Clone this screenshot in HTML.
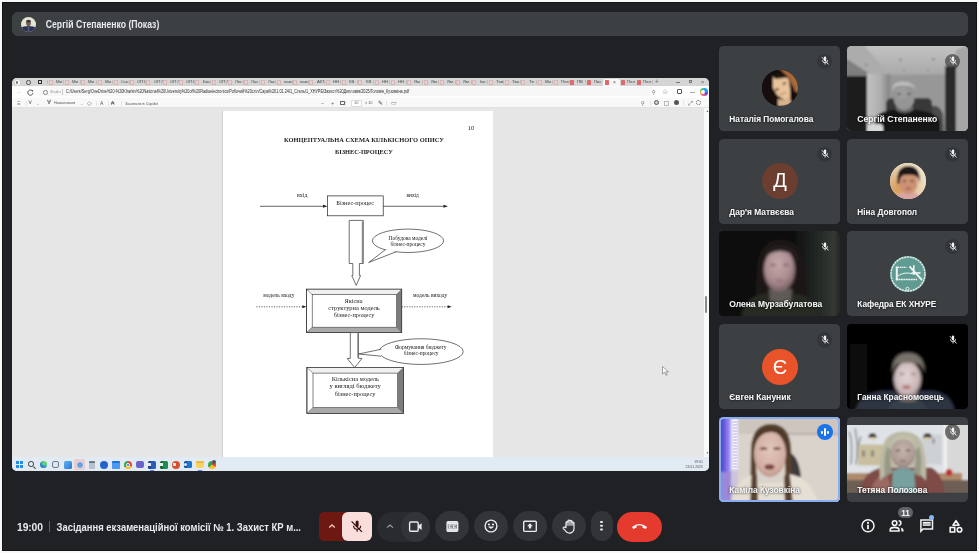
<!DOCTYPE html>
<html><head><meta charset="utf-8">
<style>
*{margin:0;padding:0;box-sizing:border-box}
html,body{width:979px;height:553px;overflow:hidden;background:#f8f8f8;font-family:"Liberation Sans",sans-serif}
.a{position:absolute}
.tile{position:absolute;width:121px;height:85.3px;border-radius:4.5px;background:#3c4043;overflow:hidden}
.nm{position:absolute;left:10px;top:67.4px;color:#f1f3f4;font-weight:bold;font-size:9px;line-height:11px;white-space:nowrap;text-shadow:0 0 2px rgba(0,0,0,.35)}
.mute{position:absolute;left:99px;top:8px;width:15px;height:15px;border-radius:50%;background:rgba(32,33,36,.45)}
.av{position:absolute;width:36px;height:36px;border-radius:50%;left:42px;top:24px;overflow:hidden}
.btn{position:absolute;top:511px;height:30px;width:34px;border-radius:15px;background:#333438}
.bl{position:absolute;filter:blur(1px)}
.tb{position:absolute;top:0;height:8px}
svg{will-change:transform}
#share div{will-change:transform}
</style></head><body>
<div class="a" style="left:2px;top:2px;width:975px;height:549px;background:#202124;box-shadow:inset 0 0 0 1px #141416"></div>
<svg width="0" height="0" style="position:absolute"><defs><filter id="ts" x="-10%" y="-30%" width="120%" height="160%"><feDropShadow dx="0" dy="0.3" stdDeviation="0.9" flood-color="#000" flood-opacity="0.55"/></filter></defs></svg>
<div class="a" style="left:12px;top:12px;width:956px;height:24px;border-radius:6px;background:#3c4043"></div>
<svg class="a" style="left:21px;top:16.5px" width="15" height="15" viewBox="0 0 15 15"><defs><clipPath id="ca"><circle cx="7.5" cy="7.5" r="7.5"/></clipPath></defs><g clip-path="url(#ca)"><rect x="-2" y="-2" width="19" height="19" fill="#e4e4d4"/><path d="M-1 16 V12 Q1 9 7.5 9 Q14 9 16 12 V16 Z" fill="#2a3158"/><rect x="6.7" y="9.5" width="1.6" height="7" fill="#5e5868"/><ellipse cx="7.5" cy="6.3" rx="2.3" ry="3" fill="#6e5e58"/><path d="M5 5.2 Q5 2.8 7.5 2.8 Q10 2.8 10 5.2 Z" fill="#3e3434"/></g></svg>
<svg class="a" style="left:45px;top:16px" width="120" height="16"><text x="0.8" y="12.1" font-family="Liberation Sans" font-weight="bold" font-size="10" fill="#e8eaed" textLength="113.5" lengthAdjust="spacingAndGlyphs">Сергій Степаненко (Показ)</text></svg>
<div class="a" id="share" style="left:12px;top:78px;width:697px;height:393px;border-radius:5px 5px 5px 5px;overflow:hidden;background:#e6e6e6">
<div class="a" style="left:0;top:0;width:697px;height:8px;background:#d5d5d5"></div>
<div class="a" style="left:2.5px;top:1.5px;width:5px;height:5px;border-radius:50%;background:#fafafa"></div>
<div class="a" style="left:4.2px;top:2.6px;width:1.6px;height:2.8px;border-radius:1px;background:#777"></div>
<div class="a" style="left:14px;top:1.8px;width:4.5px;height:4.5px;border-radius:50%;border:1px solid #555"></div>
<div class="a" style="left:25.5px;top:2px;width:4px;height:4px;border:1px solid #333;border-top-width:1.6px"></div>
<div class="a" style="left:36.6px;top:1.6px;width:4.2px;height:5px;border:0.6px solid #dcb4b4;background:#e6d4d4;border-radius:.5px"></div><div class="a" style="left:43.8px;top:1.3px;font-size:4.3px;line-height:5px;color:#4a4a4a;white-space:nowrap">Ми</div><div class="a" style="left:35.0px;top:2px;width:0.6px;height:4px;background:#bdbdbd"></div><div class="a" style="left:52.9px;top:1.6px;width:4.2px;height:5px;border:0.6px solid #dcb4b4;background:#e6d4d4;border-radius:.5px"></div><div class="a" style="left:60.1px;top:1.3px;font-size:4.3px;line-height:5px;color:#4a4a4a;white-space:nowrap">Ми</div><div class="a" style="left:51.3px;top:2px;width:0.6px;height:4px;background:#bdbdbd"></div><div class="a" style="left:69.2px;top:1.6px;width:4.2px;height:5px;border:0.6px solid #dcb4b4;background:#e6d4d4;border-radius:.5px"></div><div class="a" style="left:76.4px;top:1.3px;font-size:4.3px;line-height:5px;color:#4a4a4a;white-space:nowrap">Ми</div><div class="a" style="left:67.6px;top:2px;width:0.6px;height:4px;background:#bdbdbd"></div><div class="a" style="left:85.5px;top:1.6px;width:4.2px;height:5px;border:0.6px solid #dcb4b4;background:#e6d4d4;border-radius:.5px"></div><div class="a" style="left:92.7px;top:1.3px;font-size:4.3px;line-height:5px;color:#4a4a4a;white-space:nowrap">Ми</div><div class="a" style="left:83.9px;top:2px;width:0.6px;height:4px;background:#bdbdbd"></div><div class="a" style="left:101.8px;top:1.6px;width:4.2px;height:5px;border:0.6px solid #dcb4b4;background:#e6d4d4;border-radius:.5px"></div><div class="a" style="left:109.0px;top:1.3px;font-size:4.3px;line-height:5px;color:#4a4a4a;white-space:nowrap">Сас</div><div class="a" style="left:100.2px;top:2px;width:0.6px;height:4px;background:#bdbdbd"></div><div class="a" style="left:118.1px;top:1.6px;width:4.2px;height:5px;border:0.6px solid #dcb4b4;background:#e6d4d4;border-radius:.5px"></div><div class="a" style="left:125.3px;top:1.3px;font-size:4.3px;line-height:5px;color:#4a4a4a;white-space:nowrap">ОПУ</div><div class="a" style="left:116.5px;top:2px;width:0.6px;height:4px;background:#bdbdbd"></div><div class="a" style="left:134.4px;top:1.6px;width:4.2px;height:5px;border:0.6px solid #dcb4b4;background:#e6d4d4;border-radius:.5px"></div><div class="a" style="left:141.6px;top:1.3px;font-size:4.3px;line-height:5px;color:#4a4a4a;white-space:nowrap">ОПУ</div><div class="a" style="left:132.8px;top:2px;width:0.6px;height:4px;background:#bdbdbd"></div><div class="a" style="left:150.7px;top:1.6px;width:4.2px;height:5px;border:0.6px solid #dcb4b4;background:#e6d4d4;border-radius:.5px"></div><div class="a" style="left:157.9px;top:1.3px;font-size:4.3px;line-height:5px;color:#4a4a4a;white-space:nowrap">ОПУ</div><div class="a" style="left:149.1px;top:2px;width:0.6px;height:4px;background:#bdbdbd"></div><div class="a" style="left:167.0px;top:1.6px;width:4.2px;height:5px;border:0.6px solid #dcb4b4;background:#e6d4d4;border-radius:.5px"></div><div class="a" style="left:174.2px;top:1.3px;font-size:4.3px;line-height:5px;color:#4a4a4a;white-space:nowrap">ОПУ</div><div class="a" style="left:165.4px;top:2px;width:0.6px;height:4px;background:#bdbdbd"></div><div class="a" style="left:183.3px;top:1.6px;width:4.2px;height:5px;border:0.6px solid #dcb4b4;background:#e6d4d4;border-radius:.5px"></div><div class="a" style="left:190.5px;top:1.3px;font-size:4.3px;line-height:5px;color:#4a4a4a;white-space:nowrap">Бос</div><div class="a" style="left:181.7px;top:2px;width:0.6px;height:4px;background:#bdbdbd"></div><div class="a" style="left:199.6px;top:1.6px;width:4.2px;height:5px;border:0.6px solid #dcb4b4;background:#e6d4d4;border-radius:.5px"></div><div class="a" style="left:206.8px;top:1.3px;font-size:4.3px;line-height:5px;color:#4a4a4a;white-space:nowrap">ОПУ</div><div class="a" style="left:198.0px;top:2px;width:0.6px;height:4px;background:#bdbdbd"></div><div class="a" style="left:215.9px;top:1.6px;width:4.2px;height:5px;border:0.6px solid #dcb4b4;background:#e6d4d4;border-radius:.5px"></div><div class="a" style="left:223.1px;top:1.3px;font-size:4.3px;line-height:5px;color:#4a4a4a;white-space:nowrap">Лес</div><div class="a" style="left:214.3px;top:2px;width:0.6px;height:4px;background:#bdbdbd"></div><div class="a" style="left:232.2px;top:1.6px;width:4.2px;height:5px;border:0.6px solid #dcb4b4;background:#e6d4d4;border-radius:.5px"></div><div class="a" style="left:239.4px;top:1.3px;font-size:4.3px;line-height:5px;color:#4a4a4a;white-space:nowrap">Лас</div><div class="a" style="left:230.6px;top:2px;width:0.6px;height:4px;background:#bdbdbd"></div><div class="a" style="left:248.5px;top:1.6px;width:4.2px;height:5px;border:0.6px solid #dcb4b4;background:#e6d4d4;border-radius:.5px"></div><div class="a" style="left:255.7px;top:1.3px;font-size:4.3px;line-height:5px;color:#4a4a4a;white-space:nowrap">Лас</div><div class="a" style="left:246.9px;top:2px;width:0.6px;height:4px;background:#bdbdbd"></div><div class="a" style="left:264.8px;top:1.6px;width:4.2px;height:5px;border:0.6px solid #dcb4b4;background:#e6d4d4;border-radius:.5px"></div><div class="a" style="left:272.0px;top:1.3px;font-size:4.3px;line-height:5px;color:#4a4a4a;white-space:nowrap">пам</div><div class="a" style="left:263.2px;top:2px;width:0.6px;height:4px;background:#bdbdbd"></div><div class="a" style="left:281.1px;top:1.6px;width:4.2px;height:5px;border:0.6px solid #dcb4b4;background:#e6d4d4;border-radius:.5px"></div><div class="a" style="left:288.3px;top:1.3px;font-size:4.3px;line-height:5px;color:#4a4a4a;white-space:nowrap">пам</div><div class="a" style="left:279.5px;top:2px;width:0.6px;height:4px;background:#bdbdbd"></div><div class="a" style="left:297.4px;top:1.6px;width:4.2px;height:5px;border:0.6px solid #dcb4b4;background:#e6d4d4;border-radius:.5px"></div><div class="a" style="left:304.6px;top:1.3px;font-size:4.3px;line-height:5px;color:#4a4a4a;white-space:nowrap">АКТ</div><div class="a" style="left:295.8px;top:2px;width:0.6px;height:4px;background:#bdbdbd"></div><div class="a" style="left:313.7px;top:1.6px;width:4.2px;height:5px;border:0.6px solid #dcb4b4;background:#e6d4d4;border-radius:.5px"></div><div class="a" style="left:320.9px;top:1.3px;font-size:4.3px;line-height:5px;color:#4a4a4a;white-space:nowrap">НН</div><div class="a" style="left:312.1px;top:2px;width:0.6px;height:4px;background:#bdbdbd"></div><div class="a" style="left:330.0px;top:1.6px;width:4.2px;height:5px;border:0.6px solid #dcb4b4;background:#e6d4d4;border-radius:.5px"></div><div class="a" style="left:337.2px;top:1.3px;font-size:4.3px;line-height:5px;color:#4a4a4a;white-space:nowrap">КВ</div><div class="a" style="left:328.4px;top:2px;width:0.6px;height:4px;background:#bdbdbd"></div><div class="a" style="left:346.3px;top:1.6px;width:4.2px;height:5px;border:0.6px solid #dcb4b4;background:#e6d4d4;border-radius:.5px"></div><div class="a" style="left:353.5px;top:1.3px;font-size:4.3px;line-height:5px;color:#4a4a4a;white-space:nowrap">КВ</div><div class="a" style="left:344.7px;top:2px;width:0.6px;height:4px;background:#bdbdbd"></div><div class="a" style="left:362.6px;top:1.6px;width:4.2px;height:5px;border:0.6px solid #dcb4b4;background:#e6d4d4;border-radius:.5px"></div><div class="a" style="left:369.8px;top:1.3px;font-size:4.3px;line-height:5px;color:#4a4a4a;white-space:nowrap">НН</div><div class="a" style="left:361.0px;top:2px;width:0.6px;height:4px;background:#bdbdbd"></div><div class="a" style="left:378.9px;top:1.6px;width:4.2px;height:5px;border:0.6px solid #dcb4b4;background:#e6d4d4;border-radius:.5px"></div><div class="a" style="left:386.1px;top:1.3px;font-size:4.3px;line-height:5px;color:#4a4a4a;white-space:nowrap">НН</div><div class="a" style="left:377.3px;top:2px;width:0.6px;height:4px;background:#bdbdbd"></div><div class="a" style="left:395.2px;top:1.6px;width:4.2px;height:5px;border:0.6px solid #dcb4b4;background:#e6d4d4;border-radius:.5px"></div><div class="a" style="left:402.4px;top:1.3px;font-size:4.3px;line-height:5px;color:#4a4a4a;white-space:nowrap">Ям</div><div class="a" style="left:393.6px;top:2px;width:0.6px;height:4px;background:#bdbdbd"></div><div class="a" style="left:411.5px;top:1.6px;width:4.2px;height:5px;border:0.6px solid #dcb4b4;background:#e6d4d4;border-radius:.5px"></div><div class="a" style="left:418.7px;top:1.3px;font-size:4.3px;line-height:5px;color:#4a4a4a;white-space:nowrap">Ям</div><div class="a" style="left:409.9px;top:2px;width:0.6px;height:4px;background:#bdbdbd"></div><div class="a" style="left:427.8px;top:1.6px;width:4.2px;height:5px;border:0.6px solid #dcb4b4;background:#e6d4d4;border-radius:.5px"></div><div class="a" style="left:435.0px;top:1.3px;font-size:4.3px;line-height:5px;color:#4a4a4a;white-space:nowrap">Ям</div><div class="a" style="left:426.2px;top:2px;width:0.6px;height:4px;background:#bdbdbd"></div><div class="a" style="left:444.1px;top:1.6px;width:4.2px;height:5px;border:0.6px solid #dcb4b4;background:#e6d4d4;border-radius:.5px"></div><div class="a" style="left:451.3px;top:1.3px;font-size:4.3px;line-height:5px;color:#4a4a4a;white-space:nowrap">Ям</div><div class="a" style="left:442.5px;top:2px;width:0.6px;height:4px;background:#bdbdbd"></div><div class="a" style="left:460.4px;top:1.6px;width:4.2px;height:5px;border:0.6px solid #dcb4b4;background:#e6d4d4;border-radius:.5px"></div><div class="a" style="left:467.6px;top:1.3px;font-size:4.3px;line-height:5px;color:#4a4a4a;white-space:nowrap">Іко</div><div class="a" style="left:458.8px;top:2px;width:0.6px;height:4px;background:#bdbdbd"></div><div class="a" style="left:476.7px;top:1.6px;width:4.2px;height:5px;border:0.6px solid #dcb4b4;background:#e6d4d4;border-radius:.5px"></div><div class="a" style="left:483.9px;top:1.3px;font-size:4.3px;line-height:5px;color:#4a4a4a;white-space:nowrap">Тев</div><div class="a" style="left:475.1px;top:2px;width:0.6px;height:4px;background:#bdbdbd"></div><div class="a" style="left:493.0px;top:1.6px;width:4.2px;height:5px;border:0.6px solid #dcb4b4;background:#e6d4d4;border-radius:.5px"></div><div class="a" style="left:500.2px;top:1.3px;font-size:4.3px;line-height:5px;color:#4a4a4a;white-space:nowrap">Тва</div><div class="a" style="left:491.4px;top:2px;width:0.6px;height:4px;background:#bdbdbd"></div><div class="a" style="left:509.3px;top:1.6px;width:4.2px;height:5px;border:0.6px solid #dcb4b4;background:#e6d4d4;border-radius:.5px"></div><div class="a" style="left:516.5px;top:1.3px;font-size:4.3px;line-height:5px;color:#4a4a4a;white-space:nowrap">Тв</div><div class="a" style="left:507.7px;top:2px;width:0.6px;height:4px;background:#bdbdbd"></div><div class="a" style="left:525.6px;top:1.6px;width:4.2px;height:5px;border:0.6px solid #dcb4b4;background:#e6d4d4;border-radius:.5px"></div><div class="a" style="left:532.8px;top:1.3px;font-size:4.3px;line-height:5px;color:#4a4a4a;white-space:nowrap">Ми</div><div class="a" style="left:524.0px;top:2px;width:0.6px;height:4px;background:#bdbdbd"></div><div class="a" style="left:541.9px;top:1.6px;width:4.2px;height:5px;border:0.6px solid #dcb4b4;background:#e6d4d4;border-radius:.5px"></div><div class="a" style="left:549.1px;top:1.3px;font-size:4.3px;line-height:5px;color:#4a4a4a;white-space:nowrap">Пле</div><div class="a" style="left:540.3px;top:2px;width:0.6px;height:4px;background:#bdbdbd"></div><div class="a" style="left:558.2px;top:1.6px;width:4.2px;height:5px;background:#e06a6a;border-radius:.6px"></div><div class="a" style="left:565.4px;top:1.3px;font-size:4.3px;line-height:5px;color:#4a4a4a;white-space:nowrap">ПВ</div><div class="a" style="left:556.6px;top:2px;width:0.6px;height:4px;background:#bdbdbd"></div><div class="a" style="left:574.5px;top:1.6px;width:4.2px;height:5px;background:#e06a6a;border-radius:.6px"></div><div class="a" style="left:581.7px;top:1.3px;font-size:4.3px;line-height:5px;color:#4a4a4a;white-space:nowrap">Пис</div><div class="a" style="left:572.9px;top:2px;width:0.6px;height:4px;background:#bdbdbd"></div>
<div class="a" style="left:590.5px;top:0.5px;width:16.5px;height:7.5px;background:#f7f7f7;border-radius:2px 2px 0 0"></div>
<div class="a" style="left:593px;top:1.8px;width:3.8px;height:4.8px;background:#e06a6a;border-radius:.6px"></div>
<div class="a" style="left:600.6px;top:0.9px;font-size:5px;line-height:6px;color:#555">×</div>
<div class="a" style="left:608.5px;top:1.8px;width:3.8px;height:4.8px;background:#e06a6a;border-radius:.6px"></div>
<div class="a" style="left:615.0px;top:1.3px;font-size:4.3px;line-height:5px;color:#4a4a4a">Пол</div>
<div class="a" style="left:624.5px;top:1.8px;width:3.8px;height:4.8px;background:#e06a6a;border-radius:.6px"></div>
<div class="a" style="left:631.0px;top:1.3px;font-size:4.3px;line-height:5px;color:#4a4a4a">Пол</div>
<div class="a" style="left:640.3px;top:2px;width:0.6px;height:4px;background:#bdbdbd"></div>
<div class="a" style="left:642.6px;top:0px;font-size:6.5px;line-height:8px;color:#666">+</div>
<div class="a" style="left:664px;top:4px;width:4px;height:0.6px;background:#777"></div>
<div class="a" style="left:676.6px;top:2.4px;width:3.4px;height:3.4px;border:0.6px solid #777"></div>
<div class="a" style="left:688.6px;top:0.6px;font-size:5.5px;line-height:7px;color:#666">×</div>
<div class="a" style="left:0;top:8px;width:697px;height:12px;background:#fdfdfd"></div>
<div class="a" style="left:3.5px;top:10.5px;font-size:6px;line-height:7px;color:#c8c8c8">←</div>
<svg class="a" style="left:14.5px;top:10.5px" width="7" height="7" viewBox="0 0 7 7"><path d="M5.6 2.2 A2.6 2.6 0 1 0 6 4" fill="none" stroke="#444" stroke-width="0.9"/><path d="M4.3 0.9 L6.2 1.2 L5.9 3.1 Z" fill="#444"/></svg>
<div class="a" style="left:27px;top:9.3px;width:615px;height:9.4px;border-radius:5px;background:#f7f7f7"></div>
<div class="a" style="left:30.5px;top:11.6px;width:4.6px;height:4.6px;border-radius:50%;border:0.7px solid #888"></div>
<div class="a" style="left:38px;top:11.3px;font-size:4.4px;line-height:5px;color:#9a9a9a">Файл</div>
<div class="a" style="left:49.5px;top:11px;width:0.6px;height:5.5px;background:#ccc"></div>
<svg class="a" style="left:53px;top:9px" width="350" height="10"><text x="1" y="6.4" font-family="Liberation Sans" font-size="4.6" fill="#2e2e2e" textLength="343" lengthAdjust="spacingAndGlyphs">C:/Users/Serg/OneDrive%20-%20Kharkiv%20National%20University%20of%20Radioelectronics/Робочий%20стіл/Сара%201.01.24/1_Сталь/1_ХНУРЕ/Захист%20Дипломів/2025/Головін_Кузовкіна.pdf</text></svg>
<div class="a" style="left:640px;top:11px;font-size:5px;line-height:6px;color:#555">&#9906;</div>
<div class="a" style="left:650px;top:10.2px;font-size:6.5px;line-height:7px;color:#555">☆</div>
<div class="a" style="left:665px;top:11.2px;width:4.6px;height:4.6px;border-radius:1px;border:0.8px solid #555"></div>
<div class="a" style="left:677.5px;top:13.5px;width:4.5px;height:0.7px;background:#aaa"></div>
<div class="a" style="left:687.5px;top:10.3px;width:7.5px;height:7.5px;border-radius:50%;background:conic-gradient(#1fa2f2 0 25%,#6b4ee8 25% 45%,#f25f8c 45% 65%,#f8a33c 65% 80%,#3ac47d 80% 100%)"></div>
<div class="a" style="left:689.3px;top:12.1px;width:3.9px;height:3.9px;border-radius:50%;background:#fdfdfd"></div>
<div class="a" style="left:0;top:20px;width:697px;height:10.4px;background:#f8f8f8;border-bottom:0.6px solid #e2e2e2"></div>
<div class="a" style="left:4.5px;top:21.9px;font-size:4.0px;line-height:7px;color:#777;white-space:nowrap">☰</div>
<div class="a" style="left:13.5px;top:21.7px;font-size:5.0px;line-height:7px;color:#ccc;white-space:nowrap">|</div>
<div class="a" style="left:15.6px;top:21.4px;font-size:6.0px;line-height:7px;color:#555;white-space:nowrap">⋎</div>
<div class="a" style="left:24.3px;top:21.9px;font-size:4.0px;line-height:7px;color:#999;white-space:nowrap">⌄</div>
<div class="a" style="left:35.3px;top:21.4px;font-size:6.0px;line-height:7px;color:#444;white-space:nowrap">∀</div>
<div class="a" style="left:42.0px;top:22.1px;font-size:3.6px;line-height:7px;color:#555;white-space:nowrap">Намалювати</div>
<div class="a" style="left:68.0px;top:21.9px;font-size:4.0px;line-height:7px;color:#999;white-space:nowrap">⌄</div>
<div class="a" style="left:74.5px;top:21.5px;font-size:5.5px;line-height:7px;color:#555;white-space:nowrap">◇</div>
<div class="a" style="left:83.6px;top:21.7px;font-size:5.0px;line-height:7px;color:#ccc;white-space:nowrap">|</div>
<div class="a" style="left:87.6px;top:21.7px;font-size:5.0px;line-height:7px;color:#555;white-space:nowrap">A</div>
<div class="a" style="left:95.8px;top:21.7px;font-size:5.0px;line-height:7px;color:#ccc;white-space:nowrap">|</div>
<div class="a" style="left:99.0px;top:21.7px;font-size:5.0px;line-height:7px;color:#444;white-space:nowrap">₳</div>
<div class="a" style="left:108.8px;top:21.7px;font-size:5.0px;line-height:7px;color:#ccc;white-space:nowrap">|</div>
<div class="a" style="left:113.0px;top:22.0px;font-size:3.9px;line-height:7px;color:#555;white-space:nowrap">Зачитати в Copilot</div>
<div class="a" style="left:308.5px;top:21.5px;font-size:5.5px;line-height:7px;color:#666;white-space:nowrap">−</div>
<div class="a" style="left:318.5px;top:21.5px;font-size:5.5px;line-height:7px;color:#666;white-space:nowrap">+</div>
<div class="a" style="left:333.0px;top:21.7px;font-size:5.0px;line-height:7px;color:#ccc;white-space:nowrap">|</div>
<div class="a" style="left:374.0px;top:21.7px;font-size:5.0px;line-height:7px;color:#ccc;white-space:nowrap">|</div>
<div class="a" style="left:378.5px;top:21.5px;font-size:5.5px;line-height:7px;color:#777;white-space:nowrap">▭</div>
<div class="a" style="left:328px;top:22.8px;width:4.6px;height:4.2px;border:0.7px solid #666;border-radius:.7px"></div>
<div class="a" style="left:338.5px;top:21.7px;width:11px;height:7px;background:#fff;border:0.5px solid #ddd;border-radius:1px"></div>
<div class="a" style="left:342px;top:22.2px;font-size:4px;line-height:6px;color:#666">10</div>
<div class="a" style="left:352.5px;top:22.2px;font-size:4px;line-height:6px;color:#666">з 10</div>
<div class="a" style="left:366px;top:22px;font-size:5.5px;line-height:6px;color:#555">&#9998;</div>
<div class="a" style="left:629.0px;top:21.6px;font-size:5.0px;line-height:7px;color:#555">&#9906;</div>
<div class="a" style="left:637.6px;top:21.6px;font-size:5.0px;line-height:7px;color:#ccc">|</div>
<div class="a" style="left:676.0px;top:21.6px;font-size:6.0px;line-height:7px;color:#444">⤢</div>
<div class="a" style="left:670.5px;top:21.6px;font-size:5.0px;line-height:7px;color:#ccc">|</div>
<div class="a" style="left:642px;top:22.4px;width:5px;height:5px;border-radius:50%;border:0.9px solid #555;background:#cfcfcf"></div>
<div class="a" style="left:652px;top:22.6px;width:4.5px;height:4.5px;border:0.7px solid #bbb"></div>
<div class="a" style="left:661.5px;top:22.4px;width:5px;height:5px;border-radius:50%;background:#555"></div>
<div class="a" style="left:684px;top:22.4px;width:5px;height:5px;border-radius:50%;border:1px dotted #666"></div>
<div class="a" style="left:211px;top:33px;width:270px;height:347px;background:#ffffff;box-shadow:-0.6px 0 0.8px rgba(0,0,0,.12)"></div>
<div class="a" style="left:692px;top:30.3px;width:5px;height:349px;background:#f9f9f9"></div>
<div class="a" style="left:693.3px;top:218px;width:2.3px;height:17px;border-radius:1px;background:#8a8a8a"></div>
<div class="a" style="left:693.5px;top:31px;font-size:3px;color:#555">▲</div>
<div class="a" style="left:693.5px;top:373px;font-size:3px;color:#555">▼</div>
<svg class="a" style="left:649.5px;top:288px" width="8" height="10" viewBox="0 0 8 10"><path d="M0.5 0.5 L0.5 8 L2.5 6.2 L4 9.3 L5.2 8.8 L3.8 5.8 L6.5 5.8 Z" fill="#fff" stroke="#666" stroke-width="0.6"/></svg>
<div class="a" style="left:0;top:379.4px;width:697px;height:13.6px;background:#e2eaf3"></div>
<div class="a" style="left:4.1px;top:383.0px;width:7px;height:7px;background:linear-gradient(90deg,transparent 46%,#e4ebf3 46% 54%,transparent 54%),linear-gradient(transparent 46%,#e4ebf3 46% 54%,transparent 54%),#1f8ee8;background-blend-mode:normal"></div>
<div class="a" style="left:16.4px;top:383.1px;width:5.5px;height:5.5px;border-radius:50%;border:1.2px solid #333"></div>
<div class="a" style="left:20.6px;top:388.8px;width:2.6px;height:1.2px;background:#333;transform:rotate(45deg)"></div>
<div class="a" style="left:28.1px;top:383.0px;width:7px;height:7px;border-radius:50%;background:radial-gradient(circle at 70% 25%,#5ed36a 0 30%,#2a8ad8 55%,#1a5cb8)"></div>
<div class="a" style="left:40.1px;top:383.0px;width:7px;height:7px;border-radius:2px;border:1px solid #6a7d93;background:#dde6ef"></div>
<div class="a" style="left:51.6px;top:382.5px;width:8px;height:8px;border-radius:1.5px;background:linear-gradient(135deg,#5fb1f3,#2a78d0)"></div>
<div class="a" style="left:62.1px;top:381.0px;width:11px;height:11px;border-radius:2px;background:#f0c9c9"></div>
<div class="a" style="left:63.6px;top:382.5px;width:8px;height:8px;border-radius:50%;background:#6ea0d8;border:1.5px solid #d9e6f2"></div>
<div class="a" style="left:76.6px;top:382.5px;width:6px;height:8px;border-radius:1px;background:linear-gradient(#6b7a86 0 30%,#b9c2ca 30%)"></div>
<div class="a" style="left:87.6px;top:382.5px;width:8px;height:8px;border-radius:50%;background:#2362c9"></div>
<div class="a" style="left:99.6px;top:382.5px;width:8px;height:8px;border-radius:1px;background:linear-gradient(#1971d9 0 30%,#4a9af0 30%)"></div>
<div class="a" style="left:111.6px;top:382.5px;width:8px;height:8px;border-radius:50%;background:conic-gradient(#e6463a 0 33%,#f4c02f 33% 66%,#2ea94f 66%)"></div>
<div class="a" style="left:113.8px;top:384.7px;width:3.6px;height:3.6px;border-radius:50%;background:#3b7de0;border:0.7px solid #fff"></div>
<div class="a" style="left:123.6px;top:383.0px;width:8px;height:7px;border-radius:2px;background:#6b63c9"></div>
<div class="a" style="left:135.6px;top:382.5px;width:8px;height:8px;border-radius:1.5px;background:#2a5cb9;border-left:3px solid #1d428f"></div>
<div class="a" style="left:136.4px;top:384.8px;width:3.4px;height:3.4px;background:#e8eef8"></div>
<div class="a" style="left:137.6px;top:392.0px;width:4px;height:1px;background:#4a8af0"></div>
<div class="a" style="left:147.6px;top:382.5px;width:8px;height:8px;border-radius:1.5px;background:#1f8d4f;border-left:3px solid #136b39"></div>
<div class="a" style="left:148.4px;top:384.8px;width:3.4px;height:3.4px;background:#e8f4ec"></div>
<div class="a" style="left:159.6px;top:382.5px;width:8px;height:8px;border-radius:50%;background:#d6502d"></div>
<div class="a" style="left:160.6px;top:384.9px;width:3.2px;height:3.2px;background:#f6e2dc"></div>
<div class="a" style="left:171.6px;top:383.0px;width:8px;height:7px;border-radius:1.5px;background:#1e74c9;border-left:3px solid #0f55a6"></div>
<div class="a" style="left:172.2px;top:384.8px;width:3.4px;height:3.4px;border-radius:50%;background:#e4eef8"></div>
<div class="a" style="left:183.6px;top:383.0px;width:8px;height:7px;border-radius:1px;background:linear-gradient(#f0b93a 0 35%,#f7d26a 35%)"></div>
<div class="a" style="left:185.6px;top:392.0px;width:4px;height:1px;background:#4a8af0"></div>
<div class="a" style="left:195.6px;top:382.5px;width:8px;height:8px;border-radius:50%;background:conic-gradient(#e6463a 0 33%,#f4c02f 33% 66%,#2ea94f 66%)"></div>
<div class="a" style="left:199.6px;top:381.5px;width:4px;height:4px;border-radius:50%;background:#555"></div>
<div class="a" style="left:673px;top:381.7px;font-size:3.5px;line-height:4.6px;color:#555;text-align:right;width:18px;white-space:nowrap">19:01<br>23.01.2025</div>
</div>
<svg class="a" style="left:0;top:0" width="979" height="553" viewBox="0 0 979 553"><g font-family="Liberation Serif" fill="#111"><text x="467.8" y="129.58" font-size="6.00" textLength="6.5" lengthAdjust="spacingAndGlyphs" fill="#1a1a1a">10</text><text x="284.0" y="142.21" font-size="6.70" textLength="160.0" lengthAdjust="spacingAndGlyphs" font-weight="bold" fill="#1a1a1a">КОНЦЕПТУАЛЬНА СХЕМА КІЛЬКІСНОГО ОПИСУ</text><text x="335.0" y="154.21" font-size="6.70" textLength="58.0" lengthAdjust="spacingAndGlyphs" font-weight="bold" fill="#1a1a1a">БІЗНЕС-ПРОЦЕСУ</text><rect x="327.4" y="195.9" width="55.8" height="19.9" fill="#fff" stroke="#222" stroke-width="0.7"/><text x="336.3" y="204.54" font-size="6.80" textLength="37.7" lengthAdjust="spacingAndGlyphs" fill="#1a1a1a">Бізнес-процес</text><line x1="260" y1="206.3" x2="326" y2="206.3" stroke="#222" stroke-width="0.7"/><path d="M327.4 206.3 L323 204.8 L323 207.8 Z" fill="#222"/><line x1="383.2" y1="206.3" x2="445" y2="206.3" stroke="#222" stroke-width="0.7"/><path d="M448 206.3 L443.5 204.8 L443.5 207.8 Z" fill="#222"/><text x="297.0" y="196.91" font-size="5.80" textLength="10.5" lengthAdjust="spacingAndGlyphs" fill="#1a1a1a">вхід</text><text x="406.5" y="196.91" font-size="5.80" textLength="12.3" lengthAdjust="spacingAndGlyphs" fill="#1a1a1a">вихід</text><path d="M349.2 220.4 L363.3 220.4 L363.3 263.5 L359.4 263.5 L359.4 275.5 L360.6 275.5 L356.2 285.4 L351.8 275.5 L352.8 275.5 L352.8 263.5 L349.2 263.5 Z" fill="#fff" stroke="#333" stroke-width="0.7"/><line x1="362.3" y1="221.5" x2="362.3" y2="263" stroke="#666" stroke-width="0.9"/><ellipse cx="408" cy="240.8" rx="35.6" ry="11.7" fill="#fff" stroke="#333" stroke-width="0.7"/><path d="M385.5 249.6 L368.7 262.5 L396 251.8" fill="#fff" stroke="#333" stroke-width="0.7"/><path d="M386.5 249 L395 251 L390 253 Z" fill="#fff"/><text x="388.6" y="239.65" font-size="5.90" textLength="38.8" lengthAdjust="spacingAndGlyphs" fill="#1a1a1a">Побудова моделі</text><text x="390.6" y="245.55" font-size="5.90" textLength="34.8" lengthAdjust="spacingAndGlyphs" fill="#1a1a1a">бізнес-процесу</text><line x1="256.4" y1="306.8" x2="303" y2="306.8" stroke="#222" stroke-width="0.7" stroke-dasharray="1.2 1.3"/><path d="M306.4 306.8 L302.4 305.3 L302.4 308.3 Z" fill="#222"/><line x1="401.7" y1="306.8" x2="448" y2="306.8" stroke="#222" stroke-width="0.7" stroke-dasharray="1.2 1.3"/><path d="M451.6 306.8 L447.6 305.3 L447.6 308.3 Z" fill="#222"/><text x="263.3" y="296.95" font-size="5.90" textLength="31.1" lengthAdjust="spacingAndGlyphs" fill="#1a1a1a">модель входу</text><text x="413.0" y="296.95" font-size="5.90" textLength="34.3" lengthAdjust="spacingAndGlyphs" fill="#1a1a1a">модель виходу</text><rect x="306.4" y="289.2" width="95.3" height="43.4" fill="#fff" stroke="#333" stroke-width="0.7"/><path d="M401.7 289.2 L401.7 332.6 L396.5 327.2 L396.5 294.6 Z" fill="#7d7d7d"/><path d="M306.4 332.6 L401.7 332.6 L396.5 327.2 L312.2 327.2 Z" fill="#a9a9a9"/><path d="M306.4 289.2 L401.7 289.2 L396.5 294.6 L312.2 294.6 Z" fill="#f0f0f0"/><rect x="312.2" y="294.6" width="84.3" height="32.6" fill="#fff" stroke="#333" stroke-width="0.6"/><line x1="306.4" y1="289.2" x2="312.2" y2="294.6" stroke="#444" stroke-width="0.5"/><line x1="401.7" y1="289.2" x2="396.5" y2="294.6" stroke="#444" stroke-width="0.5"/><line x1="306.4" y1="332.6" x2="312.2" y2="327.2" stroke="#444" stroke-width="0.5"/><line x1="401.7" y1="332.6" x2="396.5" y2="327.2" stroke="#444" stroke-width="0.5"/><rect x="306.4" y="289.2" width="95.3" height="43.4" fill="none" stroke="#333" stroke-width="0.7"/><text x="344.4" y="303.08" font-size="6.90" textLength="18.2" lengthAdjust="spacingAndGlyphs" fill="#1a1a1a">Якісна</text><text x="328.3" y="310.18" font-size="6.90" textLength="51.5" lengthAdjust="spacingAndGlyphs" fill="#1a1a1a">структурна модель</text><text x="333.7" y="316.98" font-size="6.90" textLength="40.7" lengthAdjust="spacingAndGlyphs" fill="#1a1a1a">бізнес-процесу</text><path d="M350.3 332.6 L358.5 332.6 L358.5 358.4 L362 358.4 L354.7 367.6 L347.2 358.4 L350.3 358.4 Z" fill="#fff" stroke="#333" stroke-width="0.7"/><line x1="357.6" y1="333.5" x2="357.6" y2="358" stroke="#777" stroke-width="0.7"/><ellipse cx="421.1" cy="351.6" rx="42.1" ry="12.85" fill="#fff" stroke="#333" stroke-width="0.7"/><path d="M381.3 349.2 L358.7 354 L381 356.2" fill="#fff" stroke="#333" stroke-width="0.7"/><path d="M380.5 349.8 L380.3 355.6 L384 352.7 Z" fill="#fff"/><text x="395.0" y="348.70" font-size="5.90" textLength="51.4" lengthAdjust="spacingAndGlyphs" fill="#1a1a1a">Формування бюджету</text><text x="403.8" y="355.15" font-size="5.90" textLength="34.7" lengthAdjust="spacingAndGlyphs" fill="#1a1a1a">бізнес-процесу</text><rect x="306.9" y="367.6" width="96.7" height="45.8" fill="#fff" stroke="#333" stroke-width="0.7"/><path d="M403.6 367.6 L403.6 413.4 L397.6 407.5 L397.6 373.1 Z" fill="#7d7d7d"/><path d="M306.9 413.4 L403.6 413.4 L397.6 407.5 L313.0 407.5 Z" fill="#a9a9a9"/><path d="M306.9 367.6 L403.6 367.6 L397.6 373.1 L313.0 373.1 Z" fill="#f0f0f0"/><rect x="313.0" y="373.1" width="84.6" height="34.4" fill="#fff" stroke="#333" stroke-width="0.6"/><line x1="306.9" y1="367.6" x2="313.0" y2="373.1" stroke="#444" stroke-width="0.5"/><line x1="403.6" y1="367.6" x2="397.6" y2="373.1" stroke="#444" stroke-width="0.5"/><line x1="306.9" y1="413.4" x2="313.0" y2="407.5" stroke="#444" stroke-width="0.5"/><line x1="403.6" y1="413.4" x2="397.6" y2="407.5" stroke="#444" stroke-width="0.5"/><rect x="306.9" y="367.6" width="96.7" height="45.8" fill="none" stroke="#333" stroke-width="0.7"/><text x="331.8" y="381.18" font-size="6.90" textLength="47.2" lengthAdjust="spacingAndGlyphs" fill="#1a1a1a">Кількісна модель</text><text x="329.5" y="388.48" font-size="6.90" textLength="51.2" lengthAdjust="spacingAndGlyphs" fill="#1a1a1a">у вигляді бюджету</text><text x="334.7" y="395.88" font-size="6.90" textLength="40.8" lengthAdjust="spacingAndGlyphs" fill="#1a1a1a">бізнес-процесу</text></g></svg>
<div class="tile" style="left:719px;top:45.6px;">
<div class="av" style="left:43px;top:24.8px;background:#120d0b"><svg class="a" style="left:0;top:0" width="36" height="36" viewBox="0 0 36 36"><defs><filter id="b1"><feGaussianBlur stdDeviation="0.8"/></filter></defs><g filter="url(#b1)"><rect x="-2" y="-2" width="40" height="40" fill="#120d0b"/><polygon points="17,-2 38,-2 38,24 31,20 27,8" fill="#a8693a"/><polygon points="11,6 20,4 26,8 29,17 28,28 22,30 15,25 11,18" fill="#e9c39c"/><polygon points="10,5 20,3 26,8 22,8 13,9" fill="#1a1210"/><polygon points="16,29 22,30 28,27 30,36 16,36" fill="#d9b28e"/><polygon points="27,10 32,18 33,28 29,29" fill="#150f0d"/><ellipse cx="15" cy="19.5" rx="2.2" ry="1.2" fill="#5a3a26" transform="rotate(-25 15 19.5)"/><ellipse cx="22.3" cy="13.5" rx="2" ry="1.1" fill="#5a3a26" transform="rotate(-40 22.3 13.5)"/><path d="M18 24 Q21 25 24 22" stroke="#9a6a4a" stroke-width="0.9" fill="none"/></g></svg></div>
<div class="a" style="left:97.9px;top:8.1px;width:15.4px;height:15.4px;border-radius:50%;background:rgba(32,33,36,.3)"></div>
<svg class="a" style="left:98.6px;top:8.8px" width="14" height="14" viewBox="0 0 14 14"><path d="M5.9 3.6 a1.15 1.15 0 0 1 2.3 0 v2.6 a1.15 1.15 0 0 1 -2.3 0z" fill="#f1f3f4"/><path d="M4.5 6.2 a2.55 2.55 0 0 0 5.1 0 M7.05 8.9 v1.6" fill="none" stroke="#f1f3f4" stroke-width="0.85"/><line x1="3.9" y1="3.2" x2="10.5" y2="10.4" stroke="#f1f3f4" stroke-width="0.95"/></svg>
<div class="nm" style="width:86px"><svg width="86" height="11" style="display:block;overflow:visible"><text x="0.3" y="8.6" font-family="Liberation Sans" font-weight="bold" font-size="9.4" filter="url(#ts)" fill="#f1f3f4" textLength="84.0" lengthAdjust="spacingAndGlyphs">Наталія Помогалова</text></svg></div>
</div>
<div class="tile" style="left:847px;top:45.6px;background:#a0a0a0">
<svg class="a" style="left:0;top:0" width="121" height="86" viewBox="0 0 121 86"><defs><filter id="b2" x="-5%" y="-5%" width="110%" height="110%"><feGaussianBlur stdDeviation="0.8"/></filter><linearGradient id="ceil2" x1="0" y1="0" x2="0" y2="1"><stop offset="0" stop-color="#c4c4c4"/><stop offset="1" stop-color="#a9a9a9"/></linearGradient><linearGradient id="pil2" x1="0" y1="0" x2="1" y2="0"><stop offset="0" stop-color="#c2c2c2"/><stop offset="0.6" stop-color="#adadad"/><stop offset="1" stop-color="#838383"/></linearGradient></defs><g filter="url(#b2)"><rect x="-2" y="-2" width="125" height="90" fill="#a2a2a2"/><polygon points="14,-2 123,-2 123,4 98,27 43,29 30,20" fill="url(#ceil2)"/><polygon points="-2,-2 16,-2 43,29 41,31 20,30 -2,14" fill="#acacac"/><polygon points="-2,12 20,26 20,31 -2,31" fill="#7e7e7e"/><rect x="-2" y="30" width="22" height="58" fill="#1e1e1e"/><rect x="20" y="28" width="23" height="60" fill="url(#pil2)"/><rect x="43" y="29" width="55" height="59" fill="#979797"/><rect x="98" y="20" width="11" height="68" fill="#2b2b2b"/><polygon points="109,4 123,-2 123,88 109,88" fill="#a6a6a6"/><ellipse cx="53.6" cy="13.7" rx="1.3" ry="0.8" fill="#555"/><ellipse cx="86.3" cy="13.2" rx="1.3" ry="0.8" fill="#555"/><ellipse cx="19.4" cy="18.7" rx="1.3" ry="0.8" fill="#666"/><ellipse cx="56.8" cy="24.9" rx="1.1" ry="0.7" fill="#777"/><ellipse cx="80.9" cy="24.1" rx="1.1" ry="0.7" fill="#777"/><path d="M39 70 V58 Q39 52 46 52 H80 Q85 52 85 58 V70 Z" fill="#383838"/><path d="M85 60 Q92 58 96 68 L97 88 H85 Z" fill="#4c4c4c"/><path d="M28 88 V74 Q30 66 45 64 L56 62 L70 64 Q90 66 93 76 V88 Z" fill="#161616"/><ellipse cx="57" cy="51" rx="10.5" ry="13.5" fill="#959595"/><ellipse cx="55" cy="47" rx="6" ry="6" fill="#9c9c9c"/><path d="M49 60 Q57 68 66 60 L66 64 Q58 70 49 64 Z" fill="#6a6a6a"/><path d="M45.5 45 Q44 36 56 35.5 Q68 36 68.5 44 Q66 40 62 40 Q56 39 50 40 Q47 41 45.5 45 Z" fill="#bdbdbd"/><ellipse cx="52" cy="48" rx="2.2" ry="0.9" fill="#5e5e5e"/><ellipse cx="62" cy="48" rx="2.2" ry="0.9" fill="#5e5e5e"/><rect x="20" y="78" width="16" height="10" rx="3" fill="#d8d8d8"/></g></svg>
<div class="a" style="left:97.9px;top:8.1px;width:15.4px;height:15.4px;border-radius:50%;background:rgba(45,45,45,.6)"></div>
<svg class="a" style="left:98.6px;top:8.8px" width="14" height="14" viewBox="0 0 14 14"><path d="M5.9 3.6 a1.15 1.15 0 0 1 2.3 0 v2.6 a1.15 1.15 0 0 1 -2.3 0z" fill="#f1f3f4"/><path d="M4.5 6.2 a2.55 2.55 0 0 0 5.1 0 M7.05 8.9 v1.6" fill="none" stroke="#f1f3f4" stroke-width="0.85"/><line x1="3.9" y1="3.2" x2="10.5" y2="10.4" stroke="#f1f3f4" stroke-width="0.95"/></svg>
<div class="nm" style="width:82px"><svg width="82" height="11" style="display:block;overflow:visible"><text x="0.3" y="8.6" font-family="Liberation Sans" font-weight="bold" font-size="9.4" filter="url(#ts)" fill="#f1f3f4" textLength="80.0" lengthAdjust="spacingAndGlyphs">Сергій Степаненко</text></svg></div>
</div>
<div class="tile" style="left:719px;top:138.5px;">
<div class="av" style="left:42.5px;top:24.6px;background:#6c3e2f;text-align:center;color:#fff;font-size:20px;line-height:35px;font-family:'Liberation Sans';will-change:transform">Д</div>
<div class="a" style="left:97.9px;top:8.1px;width:15.4px;height:15.4px;border-radius:50%;background:rgba(32,33,36,.3)"></div>
<svg class="a" style="left:98.6px;top:8.8px" width="14" height="14" viewBox="0 0 14 14"><path d="M5.9 3.6 a1.15 1.15 0 0 1 2.3 0 v2.6 a1.15 1.15 0 0 1 -2.3 0z" fill="#f1f3f4"/><path d="M4.5 6.2 a2.55 2.55 0 0 0 5.1 0 M7.05 8.9 v1.6" fill="none" stroke="#f1f3f4" stroke-width="0.85"/><line x1="3.9" y1="3.2" x2="10.5" y2="10.4" stroke="#f1f3f4" stroke-width="0.95"/></svg>
<div class="nm" style="width:66px"><svg width="66" height="11" style="display:block;overflow:visible"><text x="0.3" y="8.6" font-family="Liberation Sans" font-weight="bold" font-size="9.4" filter="url(#ts)" fill="#f1f3f4" textLength="64.7" lengthAdjust="spacingAndGlyphs">Дар'я Матвєєва</text></svg></div>
</div>
<div class="tile" style="left:847px;top:138.5px;">
<div class="av" style="left:42.5px;top:24.6px;background:#e6d2b4"><svg class="a" style="left:0;top:0" width="36" height="36" viewBox="0 0 36 36"><defs><filter id="b4"><feGaussianBlur stdDeviation="0.8"/></filter><radialGradient id="bg4" cx="0.25" cy="0.7" r="0.8"><stop offset="0" stop-color="#d99a58"/><stop offset="0.5" stop-color="#e3c49c"/><stop offset="1" stop-color="#f1e6d2"/></radialGradient></defs><g filter="url(#b4)"><rect x="-2" y="-2" width="40" height="40" fill="url(#bg4)"/><path d="M5 37 Q7 29 18 28.5 Q29 29 32 37 Z" fill="#d9a4a2"/><ellipse cx="18.3" cy="19.5" rx="9.3" ry="11.3" fill="#cc9274"/><path d="M7.5 21 Q5.5 3 18.5 3 Q31 3 29.5 20 Q28.5 12.5 23 12 Q18.5 11.5 14 12 Q9.5 13 9.2 21 Z" fill="#1c1412"/><ellipse cx="14.5" cy="18" rx="1.9" ry="0.9" fill="#6a4636"/><ellipse cx="22" cy="18" rx="1.9" ry="0.9" fill="#6a4636"/><ellipse cx="18.3" cy="25.5" rx="2.8" ry="0.9" fill="#a05a50"/></g></svg></div>
<div class="a" style="left:97.9px;top:8.1px;width:15.4px;height:15.4px;border-radius:50%;background:rgba(32,33,36,.3)"></div>
<svg class="a" style="left:98.6px;top:8.8px" width="14" height="14" viewBox="0 0 14 14"><path d="M5.9 3.6 a1.15 1.15 0 0 1 2.3 0 v2.6 a1.15 1.15 0 0 1 -2.3 0z" fill="#f1f3f4"/><path d="M4.5 6.2 a2.55 2.55 0 0 0 5.1 0 M7.05 8.9 v1.6" fill="none" stroke="#f1f3f4" stroke-width="0.85"/><line x1="3.9" y1="3.2" x2="10.5" y2="10.4" stroke="#f1f3f4" stroke-width="0.95"/></svg>
<div class="nm" style="width:61px"><svg width="61" height="11" style="display:block;overflow:visible"><text x="0.3" y="8.6" font-family="Liberation Sans" font-weight="bold" font-size="9.4" filter="url(#ts)" fill="#f1f3f4" textLength="59.7" lengthAdjust="spacingAndGlyphs">Ніна Довгопол</text></svg></div>
</div>
<div class="tile" style="left:719px;top:231.0px;background:#0b0d0c">
<svg class="a" style="left:0;top:0" width="121" height="86" viewBox="0 0 121 86"><defs><filter id="b5" x="-10%" y="-10%" width="120%" height="120%"><feGaussianBlur stdDeviation="1.5"/></filter><linearGradient id="bg5" x1="0" y1="0" x2="1" y2="0"><stop offset="0" stop-color="#0a0b0a"/><stop offset="0.62" stop-color="#0e100f"/><stop offset="0.82" stop-color="#262b27"/><stop offset="0.93" stop-color="#333833"/><stop offset="1" stop-color="#1c1f1c"/></linearGradient><radialGradient id="face5" cx="0.45" cy="0.35" r="0.7"><stop offset="0" stop-color="#c4a8aa"/><stop offset="0.6" stop-color="#ab8c90"/><stop offset="1" stop-color="#6a5456"/></radialGradient></defs><g filter="url(#b5)"><rect x="-3" y="-3" width="127" height="92" fill="url(#bg5)"/><path d="M36 88 L38 40 Q40 9 61 9 Q84 9 86 40 L90 88 Z" fill="#1e1917"/><path d="M22 88 Q24 66 45 63 L76 63 Q98 66 102 88 Z" fill="#262a22"/><path d="M50 58 H73 L72 70 Q61 74 51 70 Z" fill="#5e5a56"/><ellipse cx="60.5" cy="39" rx="15.5" ry="22" fill="url(#face5)"/><path d="M44 30 Q46 14 61 14 Q78 14 80 30 Q72 20 61 20 Q50 20 44 30 Z" fill="#241c1a"/><ellipse cx="54" cy="34" rx="3" ry="1" fill="#6e5256"/><ellipse cx="67" cy="34" rx="3" ry="1" fill="#6e5256"/><ellipse cx="60.5" cy="49.5" rx="4" ry="1" fill="#8a666a"/></g></svg>
<div class="a" style="left:97.9px;top:8.1px;width:15.4px;height:15.4px;border-radius:50%;background:rgba(0,0,0,0)"></div>
<svg class="a" style="left:98.6px;top:8.8px" width="14" height="14" viewBox="0 0 14 14"><path d="M5.9 3.6 a1.15 1.15 0 0 1 2.3 0 v2.6 a1.15 1.15 0 0 1 -2.3 0z" fill="#f1f3f4"/><path d="M4.5 6.2 a2.55 2.55 0 0 0 5.1 0 M7.05 8.9 v1.6" fill="none" stroke="#f1f3f4" stroke-width="0.85"/><line x1="3.9" y1="3.2" x2="10.5" y2="10.4" stroke="#f1f3f4" stroke-width="0.95"/></svg>
<div class="nm" style="width:95px"><svg width="95" height="11" style="display:block;overflow:visible"><text x="0.3" y="8.6" font-family="Liberation Sans" font-weight="bold" font-size="9.4" filter="url(#ts)" fill="#f1f3f4" textLength="93.0" lengthAdjust="spacingAndGlyphs">Олена Мурзабулатова</text></svg></div>
</div>
<div class="tile" style="left:847px;top:231.0px;">
<div class="av" style="left:42.5px;top:25px;background:#5f9b92"><svg class="a" style="left:0;top:0" width="36" height="36" viewBox="0 0 36 36"><defs><filter id="b6"><feGaussianBlur stdDeviation="0.35"/></filter></defs><g filter="url(#b6)" stroke="#eef4f2" fill="none"><circle cx="18" cy="18" r="17" stroke="#dfe8e5" stroke-width="1.6" stroke-dasharray="2.2 0.6"/><line x1="6.8" y1="10.4" x2="6.8" y2="24.4" stroke-width="2"/><line x1="5.8" y1="11.3" x2="16.5" y2="11.3" stroke-width="1.2" stroke-dasharray="1.5 0.5"/><line x1="5.8" y1="23.5" x2="27" y2="23.5" stroke-width="1.6" stroke-dasharray="2 0.5"/><path d="M8 19.8 Q15 15.5 22.5 17.8" stroke-width="1"/><line x1="19.5" y1="10.3" x2="32" y2="24.2" stroke-width="2"/><line x1="23.8" y1="9.3" x2="23.8" y2="19" stroke-width="1.6"/><line x1="21.5" y1="17" x2="30.5" y2="17" stroke-width="1.6"/><circle cx="17.5" cy="32.8" r="1.6" stroke-width="0.9"/></g></svg></div>
<div class="a" style="left:97.9px;top:8.1px;width:15.4px;height:15.4px;border-radius:50%;background:rgba(32,33,36,.3)"></div>
<svg class="a" style="left:98.6px;top:8.8px" width="14" height="14" viewBox="0 0 14 14"><path d="M5.9 3.6 a1.15 1.15 0 0 1 2.3 0 v2.6 a1.15 1.15 0 0 1 -2.3 0z" fill="#f1f3f4"/><path d="M4.5 6.2 a2.55 2.55 0 0 0 5.1 0 M7.05 8.9 v1.6" fill="none" stroke="#f1f3f4" stroke-width="0.85"/><line x1="3.9" y1="3.2" x2="10.5" y2="10.4" stroke="#f1f3f4" stroke-width="0.95"/></svg>
<div class="nm" style="width:81px"><svg width="81" height="11" style="display:block;overflow:visible"><text x="0.3" y="8.6" font-family="Liberation Sans" font-weight="bold" font-size="9.4" filter="url(#ts)" fill="#f1f3f4" textLength="79.0" lengthAdjust="spacingAndGlyphs">Кафедра ЕК ХНУРЕ</text></svg></div>
</div>
<div class="tile" style="left:719px;top:324.1px;">
<div class="av" style="left:42.5px;top:24.6px;background:#e8532a;text-align:center;color:#fff;font-size:20px;line-height:36px;font-family:'Liberation Sans';will-change:transform">Є</div>
<div class="a" style="left:97.9px;top:8.1px;width:15.4px;height:15.4px;border-radius:50%;background:rgba(32,33,36,.3)"></div>
<svg class="a" style="left:98.6px;top:8.8px" width="14" height="14" viewBox="0 0 14 14"><path d="M5.9 3.6 a1.15 1.15 0 0 1 2.3 0 v2.6 a1.15 1.15 0 0 1 -2.3 0z" fill="#f1f3f4"/><path d="M4.5 6.2 a2.55 2.55 0 0 0 5.1 0 M7.05 8.9 v1.6" fill="none" stroke="#f1f3f4" stroke-width="0.85"/><line x1="3.9" y1="3.2" x2="10.5" y2="10.4" stroke="#f1f3f4" stroke-width="0.95"/></svg>
<div class="nm" style="width:63px"><svg width="63" height="11" style="display:block;overflow:visible"><text x="0.3" y="8.6" font-family="Liberation Sans" font-weight="bold" font-size="9.4" filter="url(#ts)" fill="#f1f3f4" textLength="61.4" lengthAdjust="spacingAndGlyphs">Євген Кануник</text></svg></div>
</div>
<div class="tile" style="left:847px;top:324.1px;background:#050505">
<svg class="a" style="left:0;top:0" width="121" height="86" viewBox="0 0 121 86"><defs><filter id="b8" x="-10%" y="-10%" width="120%" height="120%"><feGaussianBlur stdDeviation="1.5"/></filter><radialGradient id="face8" cx="0.45" cy="0.42" r="0.7"><stop offset="0" stop-color="#e2d4d4"/><stop offset="0.65" stop-color="#cbb8b8"/><stop offset="1" stop-color="#94807e"/></radialGradient></defs><g filter="url(#b8)"><rect x="-3" y="-3" width="127" height="92" fill="#050505"/><rect x="3" y="20" width="17" height="70" fill="#0c0e0d"/><path d="M8 90 Q10 70 35 67 L86 67 Q106 70 108 90 Z" fill="#2e3643"/><path d="M40 90 Q45 72 60 72 Q75 72 82 90 Z" fill="#353f4c"/><path d="M52 66 H70 V76 Q61 79 52 76 Z" fill="#8d7f7d"/><ellipse cx="60.5" cy="55" rx="13.5" ry="17.5" fill="url(#face8)"/><path d="M45.5 50 Q44 29 61 29 Q78 29 77.5 50 Q76 42 72 40 Q62 38 50 40 Q47 43 45.5 50 Z" fill="#78736a"/><ellipse cx="55" cy="50" rx="2.8" ry="0.9" fill="#8d7070"/><ellipse cx="66.5" cy="50" rx="2.8" ry="0.9" fill="#8d7070"/><ellipse cx="59.5" cy="63" rx="4.2" ry="1.8" fill="#b0605f"/></g></svg>
<div class="a" style="left:97.9px;top:8.1px;width:15.4px;height:15.4px;border-radius:50%;background:rgba(0,0,0,0)"></div>
<svg class="a" style="left:98.6px;top:8.8px" width="14" height="14" viewBox="0 0 14 14"><path d="M5.9 3.6 a1.15 1.15 0 0 1 2.3 0 v2.6 a1.15 1.15 0 0 1 -2.3 0z" fill="#f1f3f4"/><path d="M4.5 6.2 a2.55 2.55 0 0 0 5.1 0 M7.05 8.9 v1.6" fill="none" stroke="#f1f3f4" stroke-width="0.85"/><line x1="3.9" y1="3.2" x2="10.5" y2="10.4" stroke="#f1f3f4" stroke-width="0.95"/></svg>
<div class="nm" style="width:88px"><svg width="88" height="11" style="display:block;overflow:visible"><text x="0.3" y="8.6" font-family="Liberation Sans" font-weight="bold" font-size="9.4" filter="url(#ts)" fill="#f1f3f4" textLength="86.6" lengthAdjust="spacingAndGlyphs">Ганна Красномовець</text></svg></div>
</div>
<div class="tile" style="left:719px;top:416.6px;background:#d8d0c6">
<svg class="a" style="left:0;top:0" width="121" height="86" viewBox="0 0 121 86"><defs><filter id="b9" x="-10%" y="-10%" width="120%" height="120%"><feGaussianBlur stdDeviation="1"/></filter><linearGradient id="pur9" x1="0" y1="0" x2="1" y2="0"><stop offset="0" stop-color="#3e2f9a"/><stop offset="0.55" stop-color="#6a55e0"/><stop offset="1" stop-color="#b0a4f4"/></linearGradient><radialGradient id="face9" cx="0.5" cy="0.4" r="0.65"><stop offset="0" stop-color="#e2c6ba"/><stop offset="0.7" stop-color="#d4b0a4"/><stop offset="1" stop-color="#b58f84"/></radialGradient></defs><g filter="url(#b9)"><rect x="-3" y="-3" width="127" height="92" fill="#dad3cb"/><rect x="-3" y="-3" width="127" height="20" fill="#cec6be"/><rect x="50" y="16" width="75" height="2" fill="#b8b0a8"/><rect x="-3" y="-3" width="15" height="92" fill="url(#pur9)"/><rect x="12" y="-3" width="7" height="56" fill="#e8e4f4"/><rect x="12" y="53" width="7" height="36" fill="#cfc4dc"/><rect x="-3" y="55" width="15" height="34" fill="#9a88d8"/><path d="M68 34 Q80 38 82 60 L70 62 Z" fill="#3c3a3a"/><path d="M31 88 L32 30 Q34 7 52 7 Q70 7 72 30 L74 88 H67 L66 40 H37 L38 88 Z" fill="#56402f"/><path d="M12 88 Q16 62 33 58 L40 66 L64 66 L70 57 Q92 60 100 88 Z" fill="#e6dfd3"/><ellipse cx="51" cy="37" rx="16" ry="23" fill="url(#face9)"/><path d="M35 28 Q36 11 52 11 Q68 11 68 28 Q63 15 52 15 Q41 15 35 28 Z" fill="#4e392b"/><ellipse cx="44.5" cy="31.5" rx="3.8" ry="1.6" fill="#7a5a52"/><ellipse cx="58" cy="31.5" rx="3.8" ry="1.6" fill="#7a5a52"/><ellipse cx="50.5" cy="50" rx="5" ry="2.8" fill="#7e4a46"/><path d="M31 88 L33 50 L38 58 L39 88 Z" fill="#5a4232"/><path d="M74 88 L70 50 L65 60 L66 88 Z" fill="#5a4232"/></g></svg>
<div class="a" style="left:14px;top:3px;width:4px;height:50px;background:repeating-linear-gradient(#fff 0 1.5px,#cfc8f0 1.5px 3px);opacity:.7;filter:blur(0.4px)"></div>
<div class="a" style="left:0;top:0;width:121px;height:85.3px;border-radius:4.5px;box-shadow:inset 0 0 0 2px #86aef0"></div>
<div class="a" style="left:97.8px;top:7.6px;width:15.8px;height:15.8px;border-radius:50%;background:#1a73e8"></div>
<div class="a" style="left:101.6px;top:14px;width:2px;height:3px;border-radius:1px;background:#fff"></div><div class="a" style="left:104.7px;top:11.5px;width:2px;height:8px;border-radius:1px;background:#fff"></div><div class="a" style="left:107.8px;top:14px;width:2px;height:3px;border-radius:1px;background:#fff"></div>
<div class="nm" style="width:72px"><svg width="72" height="11" style="display:block;overflow:visible"><text x="0.3" y="8.6" font-family="Liberation Sans" font-weight="bold" font-size="9.4" filter="url(#ts)" fill="#f1f3f4" textLength="70.6" lengthAdjust="spacingAndGlyphs">Каміла Кузовкіна</text></svg></div>
</div>
<div class="tile" style="left:847px;top:416.6px;">
<svg class="a" style="left:0;top:8.5px" width="121" height="68" viewBox="0 8.5 121 68"><defs><filter id="b10" x="-5%" y="-5%" width="110%" height="110%"><feGaussianBlur stdDeviation="0.8"/></filter><clipPath id="c10"><rect x="0" y="8.5" width="121" height="67.7"/></clipPath><radialGradient id="face10" cx="0.5" cy="0.4" r="0.65"><stop offset="0" stop-color="#c4b4ac"/><stop offset="0.7" stop-color="#ae9c94"/><stop offset="1" stop-color="#8a7a74"/></radialGradient></defs><g clip-path="url(#c10)"><g filter="url(#b10)"><rect x="-3" y="5" width="127" height="75" fill="#d9dde1"/><rect x="-3" y="5" width="100" height="52" fill="#dfe3e7"/><path d="M2 15 Q6 25 4 48 M8 12 Q12 30 9 48 M14 20 Q10 30 12 40" stroke="#8d9096" stroke-width="1.6" fill="none"/><rect x="11" y="28" width="25" height="21" fill="#c8bf9f"/><rect x="15" y="34" width="3" height="6" fill="#8a8580"/><rect x="24" y="34" width="3" height="6" fill="#8a8580"/><rect x="75" y="18" width="20" height="30" fill="#cdd0d4"/><rect x="85" y="22" width="3" height="5" fill="#9a9da2"/><rect x="97" y="5" width="3" height="55" fill="#f0f0f0"/><rect x="100" y="5" width="24" height="75" fill="#d8d8d8"/><rect x="-3" y="56.5" width="118" height="7" fill="#ae8a6c"/><rect x="-3" y="63.5" width="127" height="16" fill="#6e5e54"/><circle cx="102" cy="56" r="3.4" fill="#c03232"/><path d="M23 17 L28 17 L30 21 L21 21 Z" fill="#2e2a26"/><circle cx="25.7" cy="22.5" r="1.8" fill="#f0d090"/><path d="M78 17 L83 17 L85 21 L76 21 Z" fill="#2e2a26"/><circle cx="80" cy="22.5" r="1.8" fill="#f0d090"/><path d="M12 80 Q14 54 36 51 L84 51 Q96 56 98 80 Z" fill="#7e4c46"/><path d="M22 80 Q26 60 40 56 L46 80 Z" fill="#9a6a64"/><path d="M33 64 Q31 40 38 24 Q44 15 56 15 Q69 15 74 24 Q80 40 79 64 Q72 58 68 50 L44 50 Q40 58 33 64 Z" fill="#bbb9a4"/><path d="M38 60 Q36 42 40 30 L44 34 Q42 48 46 56 Z" fill="#979a86"/><path d="M73 60 Q76 42 72 30 L68 34 Q70 48 66 56 Z" fill="#979a86"/><ellipse cx="56" cy="36.5" rx="12" ry="14.5" fill="url(#face10)"/><path d="M44 28 Q46 19 56 19 Q66 19 68 28 Q62 23 56 23 Q50 23 44 28 Z" fill="#c2c0ac"/><path d="M46 54 Q56 49 67 54 L69 80 H44 Z" fill="#78a09f"/><ellipse cx="51" cy="34" rx="2.5" ry="1" fill="#6e6058"/><ellipse cx="61" cy="34" rx="2.5" ry="1" fill="#6e6058"/><ellipse cx="56" cy="44.5" rx="3" ry="1" fill="#8a6e68"/></g></g></svg>
<div class="a" style="left:97.9px;top:7.6px;width:15.4px;height:15.4px;border-radius:50%;background:rgba(30,30,30,.6)"></div>
<svg class="a" style="left:98.6px;top:8.8px" width="14" height="14" viewBox="0 0 14 14"><path d="M5.9 3.6 a1.15 1.15 0 0 1 2.3 0 v2.6 a1.15 1.15 0 0 1 -2.3 0z" fill="#f1f3f4"/><path d="M4.5 6.2 a2.55 2.55 0 0 0 5.1 0 M7.05 8.9 v1.6" fill="none" stroke="#f1f3f4" stroke-width="0.85"/><line x1="3.9" y1="3.2" x2="10.5" y2="10.4" stroke="#f1f3f4" stroke-width="0.95"/></svg>
<div class="nm" style="width:72px"><svg width="72" height="11" style="display:block;overflow:visible"><text x="0.3" y="8.6" font-family="Liberation Sans" font-weight="bold" font-size="9.4" filter="url(#ts)" fill="#f1f3f4" textLength="70.0" lengthAdjust="spacingAndGlyphs">Тетяна Полозова</text></svg></div>
</div>
<div class="a" style="will-change:transform;left:16.5px;top:521.8px;color:#e8eaed;font-weight:bold;font-size:10.3px;line-height:12px;white-space:nowrap;letter-spacing:-0.1px">19:00</div>
<div class="a" style="left:49px;top:521px;width:1px;height:11px;background:#5f6368"></div>
<svg class="a" style="left:56px;top:519px" width="250" height="16"><text x="0.6" y="11.6" font-family="Liberation Sans" font-weight="bold" font-size="10.2" fill="#e8eaed" textLength="244.4" lengthAdjust="spacingAndGlyphs">Засідання екзаменаційної комісії № 1. Захист КР м...</text></svg>
<div class="a" style="left:318.6px;top:511.8px;width:40px;height:29.5px;border-radius:5px 0 0 5px;background:#6d1911"></div>
<div class="a" style="left:342px;top:511.6px;width:30px;height:29.8px;border-radius:6px;background:#f9dedc"></div>
<svg class="a" style="left:327px;top:521.5px" width="10" height="8" viewBox="0 0 10 8"><path d="M2.2 5.6 L5 3 L7.8 5.6" fill="none" stroke="#f4c4bc" stroke-width="1.4"/></svg>
<svg class="a" style="left:349px;top:518.5px" width="16" height="16" viewBox="0 0 16 16"><path d="M6.6 3 a1.5 1.5 0 0 1 3 0 v3.4 a1.5 1.5 0 0 1 -3 0z" fill="#3d0f0b"/><path d="M4.6 6.8 a3.5 3.5 0 0 0 7 0 M8.1 10.4 v2.4" fill="none" stroke="#3d0f0b" stroke-width="1.2"/><line x1="2.6" y1="2.4" x2="12.9" y2="12.9" stroke="#3d0f0b" stroke-width="1.3"/></svg>
<div class="a" style="left:377px;top:511.5px;width:53px;height:30px;border-radius:15px;background:#2a2b2f"></div>
<div class="a" style="left:401px;top:511.5px;width:29px;height:30px;border-radius:15px;background:#333438"></div>
<svg class="a" style="left:385.4px;top:521.5px" width="10" height="8" viewBox="0 0 10 8"><path d="M2 5.6 L5 3 L8 5.6" fill="none" stroke="#9aa0a6" stroke-width="1.2"/></svg>
<svg class="a" style="left:407px;top:517.5px" width="18" height="16" viewBox="0 0 18 16"><rect x="2.6" y="4" width="8.6" height="9.2" rx="1.2" fill="none" stroke="#e8eaed" stroke-width="1.4"/><path d="M11.3 7.6 L14.6 5.3 V11.9 L11.3 9.6 Z" fill="#e8eaed"/></svg>
<div class="btn" style="left:435px"></div>
<div class="btn" style="left:474px"></div>
<div class="btn" style="left:513px"></div>
<div class="btn" style="left:552px"></div>
<svg class="a" style="left:444px;top:517.5px" width="16" height="16" viewBox="0 0 16 16"><rect x="3.1" y="3.8" width="10.6" height="9.4" rx="1" fill="#8a8c90" stroke="#e8eaed" stroke-width="1.4"/><rect x="3.5" y="4.2" width="9.8" height="2.2" fill="#e8eaed"/><rect x="3.5" y="10.6" width="9.8" height="2.2" fill="#e8eaed"/><path d="M7.6 7.1 H5.3 V9.9 H7.6 M11.8 7.1 H9.5 V9.9 H11.8" fill="none" stroke="#e8eaed" stroke-width="1"/></svg>
<svg class="a" style="left:483px;top:517.7px" width="16" height="16" viewBox="0 0 16 16"><circle cx="8" cy="8" r="5.9" fill="none" stroke="#e8eaed" stroke-width="1.4"/><circle cx="6" cy="6.5" r="1.1" fill="#e8eaed"/><circle cx="10" cy="6.5" r="1.1" fill="#e8eaed"/><path d="M4.9 8.6 Q8 12.8 11.1 8.6 Z" fill="#e8eaed"/></svg>
<svg class="a" style="left:522px;top:517.7px" width="16" height="16" viewBox="0 0 16 16"><rect x="1.7" y="3.2" width="12.6" height="10.2" rx="1" fill="none" stroke="#e8eaed" stroke-width="1.4"/><path d="M8 5.2 L10.9 8.2 H9.2 V10.6 H6.8 V8.2 H5.1 Z" fill="#e8eaed"/></svg>
<svg class="a" style="left:561px;top:517.5px" width="16" height="17" viewBox="0 0 16 17"><defs><clipPath id="hc"><rect x="0" y="0" width="16" height="7.8"/></clipPath></defs><path d="M5 9.5 V4.6 a1 1 0 0 1 2 0 V3 a1 1 0 0 1 2 0 V3.4 a1 1 0 0 1 2 0 V5.2 a1 1 0 0 1 2 0 V10.5 a4.6 4.6 0 0 1 -7.4 3.6 L2.4 10.6 a1 1 0 0 1 1.7 -1.2 Z" fill="#9c9ea2" clip-path="url(#hc)"/><path d="M5 9.5 V4.6 a1 1 0 0 1 2 0 V3 a1 1 0 0 1 2 0 V3.4 a1 1 0 0 1 2 0 V5.2 a1 1 0 0 1 2 0 V10.5 a4.6 4.6 0 0 1 -7.4 3.6 L2.4 10.6 a1 1 0 0 1 1.7 -1.2 Z" fill="none" stroke="#e8eaed" stroke-width="1.2"/></svg>
<div class="btn" style="left:591px;width:21.5px"></div>
<div class="a" style="left:600.4px;top:520.6px;width:2.7px;height:2.7px;border-radius:50%;background:#e8eaed;box-shadow:0 3.8px 0 #e8eaed,0 7.6px 0 #e8eaed"></div>
<div class="a" style="left:617px;top:511.5px;width:45px;height:30px;border-radius:15px;background:#e53a2e"></div>
<svg class="a" style="left:630px;top:520px" width="19" height="12" viewBox="0 0 19 12"><path d="M2 7 Q9.5 0.8 17 7 L15.8 9 L12.6 7.8 L12.5 5.8 Q9.5 4.6 6.5 5.8 L6.4 7.8 L3.2 9 Z" fill="#fff"/></svg>
<svg class="a" style="left:860px;top:518px" width="16" height="16" viewBox="0 0 16 16"><circle cx="8" cy="7.8" r="6" fill="none" stroke="#f1f3f4" stroke-width="1.5"/><rect x="7.1" y="6.8" width="1.8" height="4.4" fill="#f1f3f4"/><circle cx="8" cy="4.9" r="1.05" fill="#f1f3f4"/></svg>
<div class="a" style="left:897.6px;top:506.8px;width:15px;height:11.6px;border-radius:6px;background:#5f6368"></div>
<svg class="a" style="left:897.6px;top:506.8px" width="15" height="12"><text x="7.5" y="9" text-anchor="middle" font-family="Liberation Sans" font-weight="bold" font-size="8.2" fill="#f1f3f4">11</text></svg>
<svg class="a" style="left:889px;top:519px" width="16" height="14" viewBox="0 0 16 14"><circle cx="5.6" cy="4.1" r="2.3" fill="none" stroke="#f1f3f4" stroke-width="1.6"/><path d="M1.2 12 V10.9 Q1.2 8.4 5.6 8.4 Q10 8.4 10 10.9 V12 Z" fill="none" stroke="#f1f3f4" stroke-width="1.6"/><path d="M9.6 1.8 a2.3 2.3 0 0 1 0 4.6" fill="none" stroke="#f1f3f4" stroke-width="1.6"/><path d="M11.6 8.6 Q14.6 9.3 14.6 11 V12.6 H12.4 V11 Q12.4 9.8 11.6 8.6 Z" fill="#f1f3f4"/></svg>
<svg class="a" style="left:918.5px;top:518.3px" width="16" height="15" viewBox="0 0 16 15"><path d="M1.9 1.9 H13.5 V11 H4 L1.9 13.2 Z" fill="none" stroke="#f1f3f4" stroke-width="1.5"/><rect x="3.8" y="3.9" width="7.8" height="3.9" fill="#f1f3f4"/><rect x="3.8" y="5.6" width="7.8" height="0.8" fill="#6a6c70"/></svg>
<div class="a" style="left:929.3px;top:515.3px;width:5.2px;height:5.2px;border-radius:50%;background:#8ab4f8"></div>
<svg class="a" style="left:948px;top:518.5px" width="16" height="15" viewBox="0 0 16 15"><path d="M8 1.6 L11 6.2 H5 Z" fill="none" stroke="#f1f3f4" stroke-width="1.6" stroke-linejoin="round"/><rect x="2.2" y="8.5" width="4.5" height="4.5" fill="none" stroke="#f1f3f4" stroke-width="1.6"/><circle cx="11.5" cy="10.75" r="2.3" fill="none" stroke="#f1f3f4" stroke-width="1.6"/></svg>
</body></html>
